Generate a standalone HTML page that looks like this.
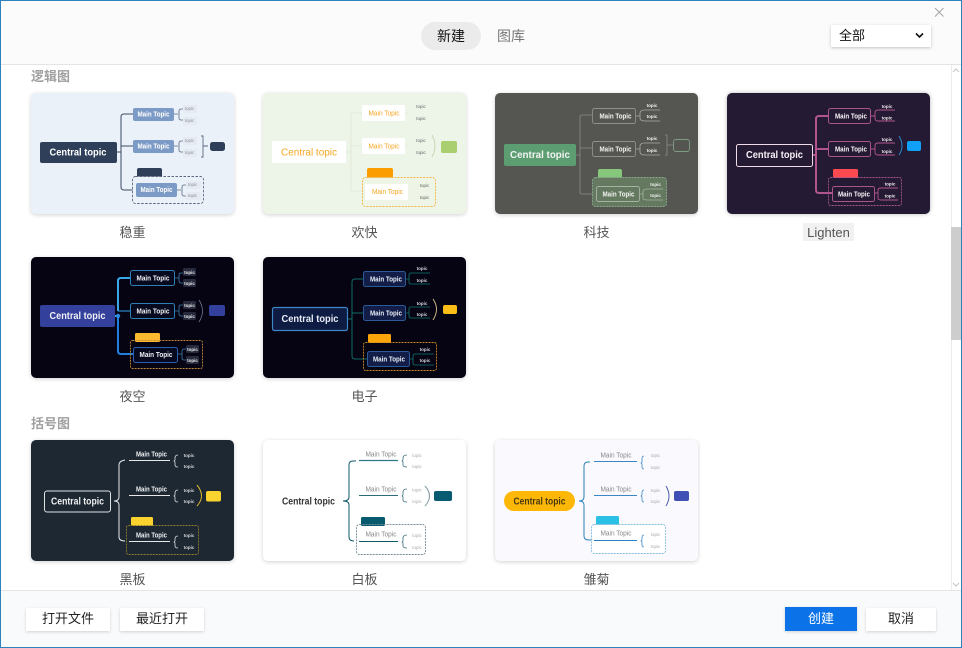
<!DOCTYPE html>
<html lang="zh">
<head>
<meta charset="utf-8">
<title>新建</title>
<style>
html,body{margin:0;padding:0;width:962px;height:648px;overflow:hidden;background:#fff}
body{font-family:"Liberation Sans","Noto Sans CJK SC",sans-serif;position:relative;color:#333}
.a{position:absolute;box-sizing:border-box}
.card{position:absolute;width:203px;height:121px;border-radius:5px;box-shadow:0 1px 4px rgba(0,0,0,.18)}
.lb{position:absolute;width:203px;text-align:center;font-size:13px;line-height:18px;color:#555}
.cat{position:absolute;left:31px;font-size:13px;line-height:18px;color:#a0a0a0;font-weight:bold}
.btn{position:absolute;background:#fff;font-size:13px;line-height:22px;height:23px;text-align:center;color:#222;box-shadow:0 1px 3px rgba(0,0,0,.16)}
svg text{font-family:"Liberation Sans",sans-serif;text-anchor:middle}
.c{font-size:10px;font-weight:bold}
.m{font-size:7px;font-weight:bold}
.n{font-size:7px}
.t{font-size:4.5px}
.tb{font-size:4.5px;font-weight:bold}
</style>
</head>
<body>
<div class="a" style="left:0;top:0;width:962px;height:65px;background:#fbfbfb;border-bottom:1px solid #e4e4e4"></div>
<div class="a" style="left:421px;top:22px;width:60px;height:28px;border-radius:14px;background:#ebebeb;font-size:14px;line-height:28px;text-align:center;color:#111">新建</div>
<div class="a" style="left:481px;top:22px;width:60px;height:28px;font-size:14px;line-height:28px;text-align:center;color:#777">图库</div>
<div class="a" style="left:831px;top:25px;width:100px;height:22px;background:#fff;box-shadow:0 1px 3px rgba(0,0,0,.22);font-size:13px;line-height:21px;padding-left:8px;color:#111">全部</div>
<svg class="a" style="left:0;top:0" width="962" height="65">
<path d="M916 33.500L919.500 37L923 33.500" fill="none" stroke="#111" stroke-width="1.600"/>
<path d="M935 8L943.500 16.500M943.500 8L935 16.500" fill="none" stroke="#a5a5a5" stroke-width="1"/>
</svg>

<div class="cat" style="top:68px">逻辑图</div>
<div class="card" style="left:31px;top:93px;background:#eaf1f9"></div>
<div class="card" style="left:263px;top:93px;background:#edf4e8"></div>
<div class="card" style="left:495px;top:93px;background:#555651"></div>
<div class="card" style="left:727px;top:93px;background:#241a33;box-shadow:0 0 4px rgba(0,0,0,.28)"></div>
<div class="lb" style="left:31px;top:224px">稳重</div>
<div class="lb" style="left:263px;top:224px">欢快</div>
<div class="lb" style="left:495px;top:224px">科技</div>
<div class="a" style="left:803px;top:223px;width:51px;height:18px;background:#f1f1f1;font-size:13px;line-height:20px;text-align:center;color:#555">Lighten</div>

<div class="card" style="left:31px;top:257px;background:#060313"></div>
<div class="card" style="left:263px;top:257px;background:#060313"></div>
<div class="lb" style="left:31px;top:388px">夜空</div>
<div class="lb" style="left:263px;top:388px">电子</div>

<div class="cat" style="top:415px">括号图</div>
<div class="card" style="left:31px;top:440px;background:#1e2833"></div>
<div class="card" style="left:263px;top:440px;background:#fff"></div>
<div class="card" style="left:495px;top:440px;background:#fafafe"></div>
<div class="lb" style="left:31px;top:571px">黑板</div>
<div class="lb" style="left:263px;top:571px">白板</div>
<div class="lb" style="left:495px;top:571px">雏菊</div>

<svg class="a" style="left:0;top:0;filter:blur(.35px)" width="962" height="648" fill="none">
<!-- 稳重 -->
<path d="M117 152H121M133 114H124Q121 114 121 117V187Q121 190 124 190H136M121 146H133" stroke="#3b4a61" stroke-width="1"/>
<path d="M174 114H178M183 109H181Q179 109 179 111V118Q179 120 181 120H183M174 146H178M183 141H181Q179 141 179 143V150Q179 152 181 152H183" stroke="#5c6a80" stroke-width=".8"/>
<path d="M201 136H203V157H201M203 146H208" stroke="#5c6a80" stroke-width=".9"/>
<rect x="40" y="142" width="77" height="21" rx="2" fill="#2f3f59"/>
<g fill="#e6ebf3"><rect x="183" y="105" width="14" height="8"/><rect x="183" y="117" width="14" height="8"/><rect x="183" y="137" width="14" height="8"/><rect x="183" y="149" width="14" height="8"/></g>
<rect x="133" y="108" width="41" height="13" rx="2" fill="#7c9ac6"/>
<rect x="133" y="140" width="41" height="13" rx="2" fill="#7c9ac6"/>
<rect x="137" y="168" width="25" height="10" rx="2" fill="#2f3f59"/>
<rect x="132.500" y="176.500" width="71" height="27" rx="3" stroke="#5c6a80" stroke-width=".9" stroke-dasharray="2.500 1.500" fill="#eaf1f9"/>
<g fill="#e6ebf3"><rect x="186" y="181" width="15" height="8"/><rect x="186" y="192" width="15" height="8"/></g>
<rect x="136" y="183" width="41" height="14" rx="2" fill="#7c9ac6"/>
<rect x="210" y="142" width="15" height="9" rx="2.500" fill="#2f3f59"/>
<path d="M177 190H181M186 185H184Q182 185 182 187V194Q182 196 184 196H186" stroke="#5c6a80" stroke-width=".8"/>
<g fill="#fff"><text class="c" x="78" y="155.500" textLength="57" lengthAdjust="spacingAndGlyphs">Central topic</text><text class="m" x="153.500" y="116.500" textLength="32" lengthAdjust="spacingAndGlyphs">Main Topic</text><text class="m" x="153.500" y="148.500" textLength="32" lengthAdjust="spacingAndGlyphs">Main Topic</text><text class="m" x="156.500" y="192" textLength="32" lengthAdjust="spacingAndGlyphs">Main Topic</text></g>
<g fill="#8b8f96"><text class="t" x="189.500" y="110">topic</text><text class="t" x="189.500" y="122">topic</text><text class="t" x="189.500" y="142">topic</text><text class="t" x="189.500" y="154">topic</text><text class="t" x="192.500" y="186">topic</text><text class="t" x="192.500" y="197">topic</text></g>

<!-- 欢快 -->
<path d="M346 152H351M362 113H353Q351 113 351 115V189Q351 191 353 191H365M351 146H362" stroke="#e0e8da" stroke-width=".8"/>
<path d="M405 113H409M405 146H409" stroke="#e3ecdc" stroke-width=".8"/>
<path d="M432 135Q438 146 432 157" stroke="#c3d6ae" stroke-width=".9"/>
<rect x="272" y="141" width="74" height="22" fill="#fff"/>
<rect x="362" y="105" width="43" height="16" rx="1" fill="#fff"/>
<rect x="362" y="138" width="43" height="16" rx="1" fill="#fff"/>
<rect x="367" y="168" width="26" height="11" rx="2" fill="#fb9d00"/>
<rect x="362.500" y="177.500" width="73" height="29" rx="3" stroke="#f4b84a" stroke-width="1" stroke-dasharray="2 1.200" fill="#eef4e6"/>
<rect x="365" y="184" width="43" height="16" rx="1" fill="#fff"/>
<rect x="441" y="141" width="16" height="12" rx="2" fill="#a9cf6f"/>
<g fill="#f5a623"><text class="c" x="309" y="155.500" style="font-weight:normal" textLength="56" lengthAdjust="spacingAndGlyphs">Central topic</text><text class="n" x="384" y="115.500" textLength="31" lengthAdjust="spacingAndGlyphs">Main Topic</text><text class="n" x="384" y="148.500" textLength="31" lengthAdjust="spacingAndGlyphs">Main Topic</text><text class="n" x="387.500" y="194" textLength="31" lengthAdjust="spacingAndGlyphs">Main Topic</text></g>
<g fill="#666"><text class="t" x="421" y="108">topic</text><text class="t" x="421" y="120">topic</text><text class="t" x="421" y="142">topic</text><text class="t" x="421" y="154">topic</text><text class="t" x="424.500" y="187">topic</text><text class="t" x="424.500" y="199">topic</text></g>

<!-- 科技 -->
<path d="M576 155H580M592 115H582Q580 115 580 117V192Q580 194 582 194H596M580 148H592" stroke="#8a8b86" stroke-width=".8"/>
<path d="M636 116H640M660 110H645Q640 110 640 113V118Q640 121 645 121H660M636 149H640M660 143H645Q640 143 640 146V152Q640 155 645 155H660" stroke="#a9aaa6" stroke-width=".8"/>
<path d="M665 135H667V155H665M667 145H673" stroke="#8a8b86" stroke-width=".8"/>
<rect x="504" y="144" width="72" height="22" rx="2" fill="#5c9e71"/>
<rect x="592.500" y="108.500" width="43" height="15" rx="2" stroke="#8f908c" stroke-width=".9"/>
<rect x="592.500" y="141.500" width="43" height="15" rx="2" stroke="#8f908c" stroke-width=".9"/>
<rect x="598" y="169" width="24" height="10" rx="2" fill="#86c77b"/>
<rect x="592.500" y="177.500" width="74" height="29" rx="3" stroke="#88a98d" stroke-width=".9" stroke-dasharray="2 1" fill="#64795f"/>
<rect x="596.500" y="186.500" width="43" height="15" rx="2" stroke="#a5b3a3" stroke-width=".9"/>
<path d="M640 194H643M663 189H648Q643 189 643 191V198Q643 200 648 200H663" stroke="#a5b3a3" stroke-width=".8"/>
<rect x="673.500" y="139.500" width="16" height="12" rx="2.500" stroke="#7f9d84" stroke-width=".9"/>
<g fill="#f2f2f2"><text class="c" x="540" y="158" textLength="60" lengthAdjust="spacingAndGlyphs">Central topic</text><text class="m" x="615.500" y="118.500" textLength="32" lengthAdjust="spacingAndGlyphs">Main Topic</text><text class="m" x="615.500" y="151.500" textLength="32" lengthAdjust="spacingAndGlyphs">Main Topic</text><text class="m" x="618.500" y="196.500" textLength="32" lengthAdjust="spacingAndGlyphs">Main Topic</text></g>
<g fill="#f2f2f2"><text class="tb" x="652" y="107">topic</text><text class="tb" x="652" y="118">topic</text><text class="tb" x="652" y="140">topic</text><text class="tb" x="652" y="152">topic</text><text class="tb" x="655.500" y="186">topic</text><text class="tb" x="655.500" y="197">topic</text></g>

<!-- Lighten -->
<path d="M813 155H816M828 116H819Q816 116 816 119V190Q816 193 819 193H832M816 149H828" stroke="#b0558d" stroke-width="2"/>
<path d="M871 116H875M895 110H878Q875 110 875 113V118Q875 121 878 121H895M871 149H875M895 143H878Q875 143 875 146V152Q875 155 878 155H895M874 193H878M898 188H881Q878 188 878 190V198Q878 200 881 200H898" stroke="#b0558d" stroke-width=".9"/>
<path d="M899 136Q905 146 899 155" stroke="#2a87c4" stroke-width="1"/>
<rect x="736.500" y="144.500" width="76" height="22" rx="2" stroke="#f0dbe8" stroke-width="1"/>
<rect x="828.500" y="108.500" width="42" height="15" rx="2" stroke="#a9558c" stroke-width="1"/>
<rect x="828.500" y="141.500" width="42" height="15" rx="2" stroke="#a9558c" stroke-width="1"/>
<rect x="833" y="169" width="25" height="9" rx="1.500" fill="#fc4a50"/>
<rect x="828.500" y="177.500" width="73" height="28" rx="2" stroke="#a9558c" stroke-width=".9" stroke-dasharray="2 1"/>
<rect x="832.500" y="186.500" width="42" height="15" rx="2" stroke="#a9558c" stroke-width="1"/>
<rect x="907" y="141" width="14" height="10" rx="2" fill="#10a0f5"/>
<g fill="#f7f2f6"><text class="c" x="774.500" y="158" textLength="57" lengthAdjust="spacingAndGlyphs">Central topic</text><text class="m" x="851" y="118.500" textLength="32" lengthAdjust="spacingAndGlyphs">Main Topic</text><text class="m" x="851" y="151.500" textLength="32" lengthAdjust="spacingAndGlyphs">Main Topic</text><text class="m" x="854" y="196.500" textLength="32" lengthAdjust="spacingAndGlyphs">Main Topic</text></g>
<g fill="#f0e8ee"><text class="tb" x="887" y="108">topic</text><text class="tb" x="887" y="119.500">topic</text><text class="tb" x="887" y="141">topic</text><text class="tb" x="887" y="153">topic</text><text class="tb" x="890" y="185.500">topic</text><text class="tb" x="890" y="197.500">topic</text></g>

<!-- 夜空 -->
<path d="M115 316H118M130 278H121Q118 278 118 281V311" stroke="#39a8e6" stroke-width="2"/>
<path d="M118 316V351Q118 354 121 354H133" stroke="#1f7fe0" stroke-width="2"/>
<path d="M118 311H130" stroke="#2b8ac8" stroke-width="1.200"/>
<circle cx="118" cy="316" r="2.200" fill="#2a8ae0"/>
<path d="M175 278H179M183 273H181Q179 273 179 275V281Q179 283 181 283H183M175 311H179M183 305H181Q179 305 179 307V314Q179 316 181 316H183M178 354H182M186 349H184Q182 349 182 351V358Q182 360 184 360H186" stroke="#3e7fb0" stroke-width=".8"/>
<path d="M199 300Q206 311 199 322" stroke="#6d7a92" stroke-width=".8"/>
<rect x="40" y="305" width="75" height="22" rx="2" fill="#33409c"/>
<rect x="130.500" y="270.500" width="44" height="15" rx="2" stroke="#2e7eb3" stroke-width="1" fill="#070a1e"/>
<rect x="130.500" y="303.500" width="44" height="15" rx="2" stroke="#2e7eb3" stroke-width="1" fill="#070a1e"/>
<rect x="135" y="333" width="25" height="9" rx="1.500" fill="#fbb930"/>
<rect x="130.500" y="340.500" width="72" height="28" rx="2" stroke="#c08a3a" stroke-width=".9" stroke-dasharray="2 1"/>
<rect x="133.500" y="347.500" width="44" height="15" rx="2" stroke="#2a5eb3" stroke-width="1" fill="#070a1e"/>
<g fill="#262a3c"><rect x="183" y="268" width="13" height="8" rx="1.500"/><rect x="183" y="279" width="13" height="8" rx="1.500"/><rect x="183" y="301" width="13" height="8" rx="1.500"/><rect x="183" y="312" width="13" height="8" rx="1.500"/><rect x="186" y="345" width="13" height="8" rx="1.500"/><rect x="186" y="356" width="13" height="8" rx="1.500"/></g>
<rect x="209" y="305" width="16" height="11" rx="2" fill="#33409c"/>
<g fill="#f0f0f6"><text class="c" x="77.500" y="319" textLength="56" lengthAdjust="spacingAndGlyphs">Central topic</text><text class="m" x="153" y="280.500" textLength="33" lengthAdjust="spacingAndGlyphs">Main Topic</text><text class="m" x="153" y="313.500" textLength="33" lengthAdjust="spacingAndGlyphs">Main Topic</text><text class="m" x="156" y="357" textLength="33" lengthAdjust="spacingAndGlyphs">Main Topic</text></g>
<g fill="#eee"><text class="tb" x="189.500" y="274">topic</text><text class="tb" x="189.500" y="285">topic</text><text class="tb" x="189.500" y="307">topic</text><text class="tb" x="189.500" y="318">topic</text><text class="tb" x="192.500" y="351">topic</text><text class="tb" x="192.500" y="362">topic</text></g>

<!-- 电子 -->
<path d="M348 319H352M363 279H355Q352 279 352 282V356Q352 359 355 359H367M352 313H363" stroke="#0f6e66" stroke-width="1"/>
<path d="M406 279H409M430 273H411Q409 273 409 275V282Q409 284 411 284H430M406 313H409M430 307H411Q409 307 409 309V316Q409 318 411 318H430M409 359H413M434 354H415Q413 354 413 356V363Q413 365 415 365H434" stroke="#0f7a70" stroke-width=".8"/>
<path d="M433 299Q440 309 433 320" stroke="#d9c48a" stroke-width=".9"/>
<rect x="272.500" y="307.500" width="75" height="23" rx="2" stroke="#3f86c7" stroke-width="1.200" fill="#0e1c44"/>
<rect x="363.500" y="271.500" width="42" height="15" rx="2" stroke="#2b5a96" stroke-width="1" fill="#121e48"/>
<rect x="363.500" y="305.500" width="42" height="15" rx="2" stroke="#2b5a96" stroke-width="1" fill="#121e48"/>
<rect x="368" y="334" width="23" height="9" rx="1.500" fill="#fca50a"/>
<rect x="363.500" y="342.500" width="73" height="28" rx="2" stroke="#c98d22" stroke-width=".9" stroke-dasharray="2 1"/>
<rect x="367.500" y="351.500" width="42" height="15" rx="2" stroke="#2b5a96" stroke-width="1" fill="#121e48"/>
<rect x="443" y="305" width="14" height="9" rx="2" fill="#fdbd17"/>
<g fill="#e8ecf4"><text class="c" x="310" y="322" textLength="57" lengthAdjust="spacingAndGlyphs">Central topic</text><text class="m" x="386" y="281.500" textLength="32" lengthAdjust="spacingAndGlyphs">Main Topic</text><text class="m" x="386" y="315.500" textLength="32" lengthAdjust="spacingAndGlyphs">Main Topic</text><text class="m" x="389" y="361.500" textLength="32" lengthAdjust="spacingAndGlyphs">Main Topic</text></g>
<g fill="#d5d8e0"><text class="tb" x="422" y="270">topic</text><text class="tb" x="422" y="282">topic</text><text class="tb" x="422" y="305">topic</text><text class="tb" x="422" y="316">topic</text><text class="tb" x="425" y="351">topic</text><text class="tb" x="425" y="362">topic</text></g>

<!-- 黑板 -->
<path d="M125 460Q119 461 119 465V497Q119 501 114 501Q119 501 119 505V537Q119 541 125 541" stroke="#e6e8ea" stroke-width="1"/>
<path d="M129 460.500H170M129 495.500H170" stroke="#e6e8ea" stroke-width="1"/>
<path d="M178 455Q175 455 175 458V460L174 461L175 462V465Q175 467 178 467M178 490Q175 490 175 493V495L174 496L175 497V500Q175 502 178 502M178 536Q175 536 175 539V541L174 542L175 543V546Q175 548 178 548" stroke="#dfe2e4" stroke-width=".8"/>
<path d="M197 485Q206 496 197 506" stroke="#d8b72e" stroke-width="1"/>
<rect x="44.500" y="491" width="66" height="21" rx="2.500" stroke="#dfe2e4" stroke-width="1"/>
<rect x="131" y="517" width="22" height="9" rx="1.500" fill="#fbd32e"/>
<rect x="126.500" y="525.500" width="72" height="29" rx="2" stroke="#8e7f2e" stroke-width=".9" stroke-dasharray="2 1"/>
<rect x="206" y="491" width="15" height="10.500" rx="2" fill="#fbd32e"/>
<path d="M129 541.500H170" stroke="#e6e8ea" stroke-width="1"/>
<g fill="#edeff0"><text class="c" x="77.500" y="504.500" textLength="53" lengthAdjust="spacingAndGlyphs">Central topic</text><text class="n" x="151.500" y="456.500" style="font-weight:bold" textLength="31" lengthAdjust="spacingAndGlyphs">Main Topic</text><text class="n" x="151.500" y="491.500" style="font-weight:bold" textLength="31" lengthAdjust="spacingAndGlyphs">Main Topic</text><text class="n" x="151.500" y="537.500" style="font-weight:bold" textLength="31" lengthAdjust="spacingAndGlyphs">Main Topic</text></g>
<g fill="#d5d8da"><text class="tb" x="189" y="457">topic</text><text class="tb" x="189" y="468">topic</text><text class="tb" x="189" y="492">topic</text><text class="tb" x="189" y="503">topic</text><text class="tb" x="189" y="537">topic</text><text class="tb" x="189" y="549">topic</text></g>

<!-- 白板 -->
<path d="M356 461H353Q349 461 349 465V497Q349 501 343 501Q349 501 349 505V537Q349 541 354 541" stroke="#0e5a6b" stroke-width="1"/>
<path d="M359 460.500H398" stroke="#2d7a82" stroke-width="1.200"/>
<path d="M359 495.500H398" stroke="#2d6b78" stroke-width="1"/>
<path d="M407 455Q403 455 403 458V460L402 461L403 462V465Q403 467 407 467M407 489Q403 489 403 492V495L402 496L403 497V500Q403 502 407 502M407 535Q403 535 403 538V541L402 542L403 543V546Q403 548 407 548" stroke="#3a6a76" stroke-width=".8"/>
<path d="M425 486Q434 496 425 506" stroke="#7f98a2" stroke-width="1"/>
<rect x="361" y="517" width="24" height="9" rx="1.500" fill="#085a70"/>
<rect x="356.500" y="524.500" width="69" height="30" rx="3" stroke="#768c94" stroke-width=".9" stroke-dasharray="2 1"/>
<path d="M359 541.500H398" stroke="#0e5a6b" stroke-width="1"/>
<rect x="434" y="491" width="18" height="10" rx="2" fill="#085a70"/>
<text class="c" x="308.500" y="504.500" fill="#333" textLength="53" lengthAdjust="spacingAndGlyphs">Central topic</text>
<g fill="#888"><text class="n" x="381" y="456.500" textLength="31" lengthAdjust="spacingAndGlyphs">Main Topic</text><text class="n" x="381" y="491.500" textLength="31" lengthAdjust="spacingAndGlyphs">Main Topic</text><text class="n" x="381" y="536.500" textLength="31" lengthAdjust="spacingAndGlyphs">Main Topic</text></g>
<g fill="#aaa"><text class="t" x="417" y="457">topic</text><text class="t" x="417" y="468">topic</text><text class="t" x="417" y="491.500">topic</text><text class="t" x="417" y="503">topic</text><text class="t" x="417" y="537">topic</text><text class="t" x="417" y="549">topic</text></g>

<!-- 雏菊 -->
<path d="M590 462H588Q584 462 584 466V497Q584 501 579 501Q584 501 584 505V536Q584 540 589 540H594" stroke="#2b7fba" stroke-width="1"/>
<path d="M594 461.500H637M594 495.500H637" stroke="#3a87c4" stroke-width="1"/>
<path d="M644 456Q642 456 642 459V462L641 463L642 464V467Q642 469 644 469M644 490Q642 490 642 493V495L641 496L642 497V500Q642 502 644 502" stroke="#3a87c4" stroke-width=".8"/>
<path d="M666 486Q672 496 666 506" stroke="#4a5da8" stroke-width="1"/>
<rect x="504" y="491" width="71" height="20" rx="10" fill="#fdb706"/>
<rect x="596" y="516" width="23" height="9" rx="1.500" fill="#2cc0e6"/>
<rect x="591.500" y="524.500" width="74" height="29" rx="3" stroke="#82bcdc" stroke-width=".9" stroke-dasharray="2 1" fill="#fff"/>
<path d="M594 540.500H637" stroke="#2b7fc8" stroke-width="1"/>
<path d="M644 535Q642 535 642 538V540L641 541L642 542V545Q642 547 644 547" stroke="#3a87c4" stroke-width=".8"/>
<rect x="674" y="491" width="15" height="10" rx="2" fill="#3f4fb5"/>
<text class="c" x="539.500" y="504.500" fill="#4a3a10" textLength="52" lengthAdjust="spacingAndGlyphs">Central topic</text>
<g fill="#888"><text class="n" x="616" y="457.500" textLength="31" lengthAdjust="spacingAndGlyphs">Main Topic</text><text class="n" x="616" y="491.500" textLength="31" lengthAdjust="spacingAndGlyphs">Main Topic</text><text class="n" x="616" y="535.500" textLength="31" lengthAdjust="spacingAndGlyphs">Main Topic</text></g>
<g fill="#aaa"><text class="t" x="655.500" y="457">topic</text><text class="t" x="655.500" y="469">topic</text><text class="t" x="655.500" y="492">topic</text><text class="t" x="655.500" y="503">topic</text><text class="t" x="655.500" y="536">topic</text><text class="t" x="655.500" y="548">topic</text></g>
</svg>

<!-- scrollbar -->
<div class="a" style="left:951px;top:65px;width:10px;height:525px;background:#fff;border-left:1px solid #ececec"></div>
<div class="a" style="left:951px;top:227px;width:10px;height:113px;background:#cdcdcd"></div>
<svg class="a" style="left:951px;top:65px" width="10" height="525" fill="none">
<path d="M2 7L5 4L8 7" stroke="#c4c4c4"/>
<path d="M2 518L5 521L8 518" stroke="#c4c4c4"/>
</svg>

<!-- footer -->
<div class="a" style="left:0;top:590px;width:962px;height:58px;background:#f9fafc;border-top:1px solid #e4e4e4"></div>
<div class="btn" style="left:26px;top:608px;width:84px">打开文件</div>
<div class="btn" style="left:120px;top:608px;width:84px">最近打开</div>
<div class="btn" style="left:785px;top:607px;width:72px;height:24px;line-height:24px;background:#0b72e7;color:#fff">创建</div>
<div class="btn" style="left:866px;top:608px;width:70px">取消</div>

<!-- window border -->
<div class="a" style="left:0;top:0;width:962px;height:648px;border:1px solid #2d82bd;pointer-events:none"></div>
</body>
</html>
